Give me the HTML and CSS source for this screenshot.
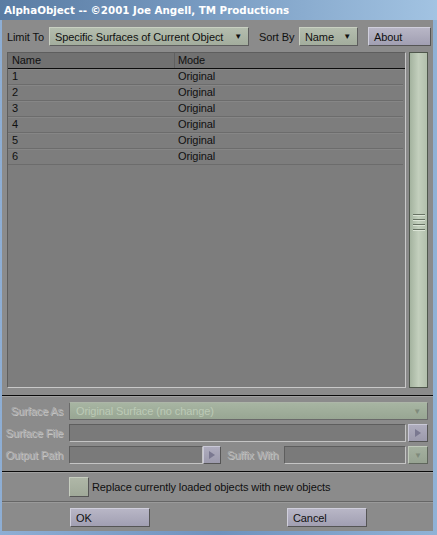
FILE: index.html
```html
<!DOCTYPE html>
<html>
<head>
<meta charset="utf-8">
<link rel="stylesheet" href="styles.css">
</head>
<body>
<div class="win">
  <div class="title">AlphaObject -- ©2001 Joe Angell, TM Productions</div>
  <div class="client">
    <div class="toprow">
      <span class="lbl lbl-limit">Limit To</span>
      <div class="drop drop-limit"><span>Specific Surfaces of Current Object</span><span class="tri">&#9660;</span></div>
      <span class="lbl lbl-sort">Sort By</span>
      <div class="drop drop-sort"><span>Name</span><span class="tri">&#9660;</span></div>
      <div class="btn btn-about">About</div>
    </div>
    <div class="listrow">
      <div class="list">
        <div class="lhead"><div class="c1">Name</div><div class="c2">Mode</div></div>
        <div class="lrow"><div class="c1">1</div><div class="c2">Original</div></div>
        <div class="lrow"><div class="c1">2</div><div class="c2">Original</div></div>
        <div class="lrow"><div class="c1">3</div><div class="c2">Original</div></div>
        <div class="lrow"><div class="c1">4</div><div class="c2">Original</div></div>
        <div class="lrow"><div class="c1">5</div><div class="c2">Original</div></div>
        <div class="lrow"><div class="c1">6</div><div class="c2">Original</div></div>
      </div>
      <div class="scroll"><div class="grip"><i></i><i></i><i></i><i></i></div></div>
    </div>
    <div class="divider"></div>
    <div class="frow">
      <span class="dlbl w-lbl">Surface As</span>
      <div class="gdrop"><span>Original Surface (no change)</span><span class="tri tri-dis">&#9660;</span></div>
    </div>
    <div class="frow">
      <span class="dlbl w-lbl">Surface File</span>
      <div class="field field-file"></div>
      <div class="abtn"><svg width="8" height="10" viewBox="0 0 8 10"><path d="M1 1 L7 5 L1 9 Z" fill="#7a7890"/></svg></div>
    </div>
    <div class="frow">
      <span class="dlbl w-lbl">Output Path</span>
      <div class="field field-out"></div>
      <div class="abtn abtn-small"><svg width="8" height="10" viewBox="0 0 8 10"><path d="M1 1 L7 5 L1 9 Z" fill="#7a7890"/></svg></div>
      <span class="dlbl lbl-suffix">Suffix With</span>
      <div class="field field-suffix"></div>
      <div class="gbtn"><span class="tri tri-dis">&#9660;</span></div>
    </div>
    <div class="divider divider2"></div>
    <div class="checkrow">
      <div class="check"></div>
      <span class="lbl">Replace currently loaded objects with new objects</span>
    </div>
    <div class="sep"></div>
    <div class="btnrow">
      <div class="btn btn-ok">OK</div>
      <div class="btn btn-cancel">Cancel</div>
    </div>
  </div>
</div>
</body>
</html>
```

FILE: styles.css
```css
html, body {
  margin: 0;
  padding: 0;
  background: #7d9ec4;
}
.win {
  width: 437px;
  height: 535px;
  display: flex;
  flex-direction: column;
  background: linear-gradient(90deg, #8eaed4, #6f92bd 50%, #90b2d6);
  font-family: "Liberation Sans", Arial, sans-serif;
  font-size: 11px;
  letter-spacing: -0.1px;
  color: #101010;
  box-sizing: border-box;
}
.title {
  height: 20px;
  line-height: 20px;
  padding-left: 4px;
  color: #fff;
  font-family: "DejaVu Sans", Verdana, sans-serif;
  font-weight: bold;
  font-size: 10.3px;
  letter-spacing: 0;
  background: linear-gradient(90deg, #5a7ca3 0%, #7396bd 40%, #a2c3e2 100%);
  white-space: nowrap;
}
.client {
  flex: 1;
  margin: 0 4px 4px 2px;
  background: #8b8b8b;
  display: flex;
  flex-direction: column;
}
.toprow {
  margin-top: 7px;
  height: 19px;
  display: flex;
  align-items: center;
}
.lbl { white-space: nowrap; }
.lbl-limit { margin-left: 5px; width: 42px; }
.lbl-sort { margin-left: 10px; width: 40px; }
.drop {
  height: 19px;
  box-sizing: border-box;
  border: 1px solid #5d5d5d;
  border-top-color: #c9d0c2;
  border-left-color: #c9d0c2;
  background: linear-gradient(180deg, #b4bdae, #a3ad9d);
  display: flex;
  align-items: center;
  justify-content: space-between;
  padding: 0 6px 0 5px;
  white-space: nowrap;
}
.drop-limit { width: 200px; }
.drop-sort { width: 59px; }
.tri { font-size: 8px; color: #111; }
.tri-dis { color: #7f8a7b; }
.btn {
  height: 19px;
  box-sizing: border-box;
  border: 1px solid #555;
  border-top-color: #d0cfdc;
  border-left-color: #d0cfdc;
  background: linear-gradient(180deg, #b8b6c6, #a19fb2);
  display: flex;
  align-items: center;
  padding-left: 5px;
}
.btn-about { width: 63px; margin-left: 10px; }
.listrow {
  margin-top: 6px;
  height: 336px;
  display: flex;
}
.list {
  margin-left: 5px;
  width: 399px;
  box-sizing: border-box;
  border: 1px solid #5e5e5e;
  border-right-color: #c8c8c8;
  border-bottom-color: #c8c8c8;
  background: #7d7d7d;
}
.lhead {
  height: 15px;
  display: flex;
  background: #717171;
  border-bottom: 1px solid #0c0c0c;
}
.lrow {
  height: 15px;
  display: flex;
  border-bottom: 1px solid #6c6c6c;
  box-shadow: inset 0 1px 0 #868686;
  margin-right: 2px;
}
.c1 {
  width: 162px;
  padding-left: 4px;
  border-right: 1px solid #606060;
  line-height: 15px;
}
.lrow .c1 { border-right: none; width: 163px; }
.c2 { padding-left: 3px; line-height: 15px; }
.scroll {
  margin-left: 3px;
  width: 19px;
  box-sizing: border-box;
  border: 1px solid #4f574c;
  background: linear-gradient(90deg, #a4b39f, #c3cfbd 50%, #b2bfac);
  display: flex;
  align-items: center;
  justify-content: center;
}
.grip { display: flex; flex-direction: column; gap: 4px; margin-top: 4px; }
.grip i {
  display: block;
  width: 12px;
  height: 1px;
  background: #687364;
  box-shadow: 0 1px 0 #dbe4d6;
}
.divider {
  margin-top: 7px;
  height: 1px;
  background: #0a0a0a;
  box-shadow: 0 1px 0 #a0a0a0;
}
.frow {
  margin-top: 4px;
  height: 18px;
  display: flex;
  align-items: center;
}
.divider + .frow { margin-top: 6px; }
.dlbl {
  color: #ababab;
  text-shadow: 1px 1px 0 #c4c4c4;
  white-space: nowrap;
}
.w-lbl { width: 58px; padding-left: 3px; margin-right: 6px; text-align: right; }
.gdrop {
  width: 359px;
  height: 18px;
  box-sizing: border-box;
  border: 1px solid #6a6a6a;
  border-top-color: #adb6a8;
  background: linear-gradient(180deg, #a7b5a2, #98a693);
  display: flex;
  align-items: center;
  justify-content: space-between;
  padding: 0 6px 0 6px;
  color: #bccab6;
}
.field {
  height: 18px;
  box-sizing: border-box;
  background: #7a7a7a;
  border: 1px solid #5e5e5e;
  border-right-color: #c4c4c4;
  border-bottom-color: #c4c4c4;
}
.field-file { width: 337px; }
.field-out { width: 134px; }
.field-suffix { width: 122px; }
.abtn {
  margin-left: 2px;
  width: 20px;
  height: 18px;
  box-sizing: border-box;
  border: 1px solid #555;
  border-top-color: #c9c8d6;
  border-left-color: #c9c8d6;
  background: linear-gradient(180deg, #aeacbd, #9c9aac);
  display: flex;
  align-items: center;
  justify-content: center;
}
.abtn-small { margin-left: 0; width: 18px; }
.lbl-suffix { margin-left: 6px; width: 57px; }
.gbtn {
  margin-left: 2px;
  width: 20px;
  height: 18px;
  box-sizing: border-box;
  border: 1px solid #5f665c;
  border-top-color: #c0c9bb;
  border-left-color: #c0c9bb;
  background: linear-gradient(180deg, #a4b09f, #97a392);
  display: flex;
  align-items: center;
  justify-content: center;
}
.divider2 { margin-top: 7px; }
.checkrow {
  margin-top: 5px;
  height: 20px;
  display: flex;
  align-items: center;
}
.check {
  margin-left: 67px;
  width: 20px;
  height: 20px;
  box-sizing: border-box;
  border: 1px solid #555;
  border-top-color: #c6cdbf;
  border-left-color: #c6cdbf;
  background: linear-gradient(180deg, #afb7a7, #a0a999);
  margin-right: 3px;
}
.sep {
  margin-top: 4px;
  height: 1px;
  background: #666;
  box-shadow: 0 1px 0 #9a9a9a;
}
.btnrow {
  margin-top: 6px;
  height: 19px;
  display: flex;
}
.btn-ok { margin-left: 68px; width: 80px; }
.btn-cancel { margin-left: 137px; width: 80px; }
```
